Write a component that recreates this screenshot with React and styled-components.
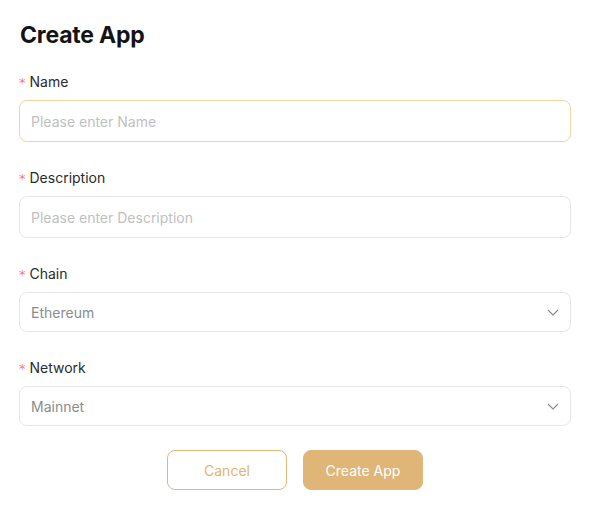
import React from "react";
import styled, { createGlobalStyle } from "styled-components";

const Global = createGlobalStyle`
  body { margin: 0; background: #fff; font-family: Inter, "Noto Sans", sans-serif; }
  * { box-sizing: border-box; }
`;

const Page = styled.div`
  padding: 20px 21px 20px 19px;
  width: 592px;
`;

const Title = styled.h1`
  margin: 0 0 0 1px;
  font-size: 23px;
  line-height: 30px;
  font-weight: 700;
  color: #141414;
  letter-spacing: -0.2px;
`;

const Form = styled.div`
  margin-top: 20px;
  display: flex;
  flex-direction: column;
  gap: 24px;
`;

const Item = styled.div`
  display: flex;
  flex-direction: column;
  gap: 6px;
`;

const Label = styled.label`
  display: flex;
  align-items: center;
  font-size: 14px;
  line-height: 22px;
  font-weight: 400;
  color: #2b2b2b;
  &::before {
    content: "*";
    color: #ff7875;
    font-family: SimSun, "DejaVu Sans", sans-serif;
    font-size: 13px;
    margin-right: 4px;
    margin-top: 2px;
  }
`;

const Input = styled.input`
  height: ${(p) => (p.$tall ? 42 : 40)}px;
  width: 100%;
  border: 1px solid ${(p) => (p.$focus ? "#f0d3a0" : "#e6e6e6")};
  border-radius: 8px;
  padding: 0 11px;
  font-family: inherit;
  font-size: 14px;
  color: #333;
  outline: none;
  background: #fff;
  &::placeholder { color: #bfbfbf; }
`;

const Select = styled.div`
  height: 40px;
  border: 1px solid #e6e6e6;
  border-radius: 8px;
  padding: 0 11px;
  display: flex;
  align-items: center;
  justify-content: space-between;
  font-size: 14px;
  color: #8c8c8c;
`;

const Buttons = styled.div`
  display: flex;
  justify-content: center;
  gap: 16px;
  margin-top: 24px;
`;

const Button = styled.button`
  width: 120px;
  height: 40px;
  border-radius: 8px;
  font-family: inherit;
  font-size: 14px;
  border: 1px solid #e1b777;
  background: ${(p) => (p.$primary ? "#dfb677" : "#fff")};
  color: ${(p) => (p.$primary ? "#fff" : "#e0b56f")};
`;

const Chevron = () => (
  <svg width="12" height="12" viewBox="0 0 12 12" fill="none">
    <path d="M1 4l5 5 5-5" stroke="#888" strokeWidth="1.1" />
  </svg>
);

export default function App() {
  return (
    <Page>
      <Global />
      <Title>Create App</Title>
      <Form>
        <Item>
          <Label>Name</Label>
          <Input $tall $focus placeholder="Please enter Name" />
        </Item>
        <Item>
          <Label>Description</Label>
          <Input $tall placeholder="Please enter Description" />
        </Item>
        <Item>
          <Label>Chain</Label>
          <Select>
            Ethereum
            <Chevron />
          </Select>
        </Item>
        <Item>
          <Label>Network</Label>
          <Select>
            Mainnet
            <Chevron />
          </Select>
        </Item>
      </Form>
      <Buttons>
        <Button>Cancel</Button>
        <Button $primary>Create App</Button>
      </Buttons>
    </Page>
  );
}
